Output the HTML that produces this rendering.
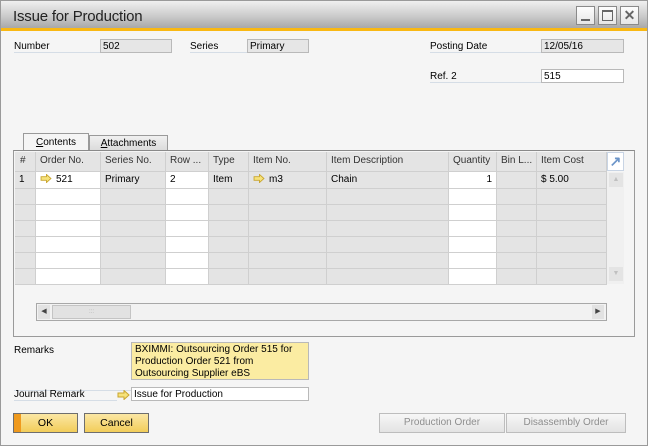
<!DOCTYPE html>
<html><head><style>
*{margin:0;padding:0;box-sizing:border-box}
body{width:648px;height:446px;overflow:hidden;background:#fff;font-family:"Liberation Sans",sans-serif;font-size:10px;color:#000;position:relative}
.a{position:absolute}
.win{left:0;top:0;width:648px;height:446px;border:1px solid #9a9a9a;background:#f5f5f5}
.title{left:1px;top:1px;width:646px;height:27px;background:linear-gradient(#f0f0f0,#c8c8c8 60%,#a8a8a8)}
.orange{left:1px;top:28px;width:646px;height:3px;background:#f9b813}
.tb{top:6px;width:19px;height:19px;border:1px solid #8a8a8a;background:linear-gradient(#fdfdfd,#e6e6e6)}
.lbl{height:14px;border-bottom:1px solid #d5dde6;line-height:15px;padding-left:0}
.fld{height:14px;border:1px solid #b9b9b9;background:#e6e6e6;line-height:13px;padding-left:2px}
.wf{background:#fff}
.hc{top:152px;height:19px;background:#e4e4e4;border-right:1px solid #cfcfcf;line-height:18px;padding-left:4px;color:#333;white-space:nowrap;overflow:hidden}
.btn{height:20px;border:1px solid #6e6e6e;background:linear-gradient(#fbe7a4,#f2cd5a);text-align:center;line-height:18px;font-size:10.5px}
.gb{height:20px;border:1px solid #bdbdbd;background:linear-gradient(#f7f7f7,#e3e3e3);text-align:center;line-height:18px;color:#8e8e8e}
.arr{display:inline-block;width:12px;height:9px;vertical-align:-1px;margin-right:4px}
</style></head><body>
<div class="a win"></div>
<div class="a title"></div>
<div class="a" style="left:13px;top:8px;font-size:15px;color:#222;letter-spacing:-0.2px">Issue for Production</div>
<div class="a orange"></div>
<div class="a tb" style="left:576px"><div class="a" style="left:4px;top:12px;width:9px;height:2px;background:#666"></div></div>
<div class="a tb" style="left:598px"><div class="a" style="left:3px;top:3px;width:11px;height:11px;border:1px solid #666;border-top-width:2px"></div></div>
<div class="a tb" style="left:620px;font-size:14px;font-weight:bold;color:#666;text-align:center;line-height:16px">✕</div>

<div class="a lbl" style="left:14px;top:39px;width:86px">Number</div>
<div class="a fld" style="left:100px;top:39px;width:72px">502</div>
<div class="a lbl" style="left:190px;top:39px;width:58px">Series</div>
<div class="a fld" style="left:247px;top:39px;width:62px">Primary</div>
<div class="a lbl" style="left:430px;top:39px;width:112px">Posting Date</div>
<div class="a fld" style="left:541px;top:39px;width:83px">12/05/16</div>
<div class="a lbl" style="left:430px;top:69px;width:112px">Ref. 2</div>
<div class="a fld wf" style="left:541px;top:69px;width:83px">515</div>

<div class="a" style="left:23px;top:133px;width:66px;height:19px;border:1px solid #9a9a9a;border-bottom:none;background:#f5f5f5;text-align:center;line-height:18px"><u>C</u>ontents</div>
<div class="a" style="left:89px;top:135px;width:79px;height:16px;border:1px solid #9a9a9a;border-bottom:none;background:linear-gradient(#f0f0f0,#dadada);text-align:center;line-height:15px"><u>A</u>ttachments</div>
<div class="a" style="left:13px;top:150px;width:622px;height:187px;border:1px solid #9a9a9a;border-top-color:#8a8a8a;background:#f5f5f5"></div>
<div class="a" style="left:15px;top:152px;width:592px;height:132px;background:#e4e4e4"></div>
<div id="g"></div>
<div class="a" style="left:607px;top:152px;width:17px;height:19px;background:#fff;border:1px solid #c8d4e4;color:#6c95c9;font-size:14px;font-weight:bold;text-align:center;line-height:16px">↗</div>
<div class="a" style="left:607px;top:172px;width:17px;height:112px;background:#f0f0f0"></div>
<div class="a" style="left:609px;top:173px;width:14px;height:14px;background:#e4e4e4;color:#c0c0c0;font-size:7px;text-align:center;line-height:14px">▲</div>
<div class="a" style="left:609px;top:267px;width:14px;height:14px;background:#e4e4e4;color:#c0c0c0;font-size:7px;text-align:center;line-height:14px">▼</div>
<div class="a" style="left:36px;top:303px;width:571px;height:18px;border:1px solid #a8a8a8;background:#f2f2f2"></div>
<div class="a" style="left:38px;top:305px;width:12px;height:14px;background:#e2e2e2;font-size:7px;line-height:14px;text-align:center;color:#444">◀</div>
<div class="a" style="left:52px;top:305px;width:79px;height:14px;background:#e2e2e2;border:1px solid #c4c4c4;font-size:6px;color:#aaa;text-align:center;line-height:12px">:::</div>
<div class="a" style="left:592px;top:305px;width:12px;height:14px;background:#e2e2e2;font-size:7px;line-height:14px;text-align:center;color:#444">▶</div>

<div class="a lbl" style="left:14px;top:344px;width:117px;height:47px;line-height:14px">Remarks</div>
<div class="a" style="left:131px;top:342px;width:178px;height:38px;border:1px solid #b9b9b9;background:#fbeca2;line-height:12px;padding:1px 3px;font-size:10px">BXIMMI: Outsourcing Order 515 for Production Order 521 from Outsourcing Supplier eBS</div>
<div class="a lbl" style="left:14px;top:387px;width:103px">Journal Remark</div>
<svg class="a" style="left:117px;top:390px" width="13" height="10"><path d="M1 3h6V0.5L12 5 7 9.5V7H1z" fill="#f6e27a" stroke="#c9a52e"/></svg>
<div class="a fld wf" style="left:131px;top:387px;width:178px">Issue for Production</div>

<div class="a btn" style="left:13px;top:413px;width:65px;background:linear-gradient(90deg,#ef9a1e 0,#ef9a1e 7px,transparent 7px),linear-gradient(#fbe7a4,#f2cd5a)">OK</div>
<div class="a btn" style="left:84px;top:413px;width:65px">Cancel</div>
<div class="a gb" style="left:379px;top:413px;width:126px">Production Order</div>
<div class="a gb" style="left:506px;top:413px;width:120px">Disassembly Order</div>

<script>
var cols=[[15,36,'#'],[36,101,'Order No.'],[101,166,'Series No.'],[166,209,'Row ...'],[209,249,'Type'],[249,327,'Item No.'],[327,449,'Item Description'],[449,497,'Quantity'],[497,537,'Bin L...'],[537,607,'Item Cost']];
var white={1:1,3:1,7:1};
var r1=['1','521','Primary','2','Item','m3','Chain','1','','$ 5.00'];
var h='';
var arrow='<svg class="arr" viewBox="0 0 13 10"><path d="M1 3h6V0.5L12 5 7 9.5V7H1z" fill="#f6e27a" stroke="#c9a52e"/></svg>';
cols.forEach(function(c,i){
 h+='<div class="a hc" style="left:'+c[0]+'px;width:'+(c[1]-c[0])+'px'+(i==0?';padding-left:5px':'')+'">'+c[2]+'</div>';
 var ys=[171,188,204,220,236,252,268],ye=284;
 for(var r=0;r<7;r++){var t=ys[r],b=r<6?ys[r+1]:ye;
  var txt=r==0?r1[i]:'';
  if(r==0&&(i==1||i==5))txt=arrow+txt;
  h+='<div class="a" style="left:'+c[0]+'px;top:'+t+'px;width:'+(c[1]-c[0])+'px;height:'+(b-t)+'px;background:'+(white[i]?'#fff':'#e4e4e4')+';border-right:1px solid #cfcfcf;border-top:1px solid #cfcfcf;line-height:15px;padding:0 4px;'+(i==7?'text-align:right;':'')+'white-space:nowrap">'+txt+'</div>';
 }
});
h+='<div class="a" style="left:15px;top:284px;width:592px;height:1px;background:#cfcfcf"></div>';
document.getElementById('g').innerHTML=h;
</script>
</body></html>
